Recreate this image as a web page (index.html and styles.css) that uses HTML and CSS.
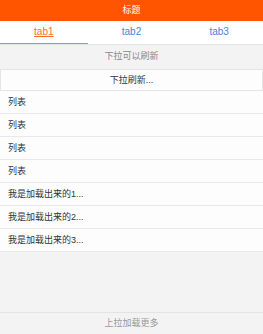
FILE: index.html
```html
<!DOCTYPE html>
<html lang="zh-CN">
<head>
    <meta charset="UTF-8">
    <meta name="viewport" content="width=device-width, initial-scale=1.0">
    <title>标题</title>
    <link rel="stylesheet" href="styles.css">
</head>
<body>
    <div class="page">
        <div class="header">标题</div>
        <div class="tabs">
            <a class="tab active">tab1</a>
            <a class="tab">tab2</a>
            <a class="tab">tab3</a>
        </div>
        <div class="pull-hint">下拉可以刷新</div>
        <div class="list">
            <div class="refreshing">下拉刷新...</div>
            <div class="item">列表</div>
            <div class="item">列表</div>
            <div class="item">列表</div>
            <div class="item">列表</div>
            <div class="item">我是加载出来的1...</div>
            <div class="item">我是加载出来的2...</div>
            <div class="item">我是加载出来的3...</div>
        </div>
        <div class="spacer"></div>
        <div class="footer">上拉加载更多</div>
    </div>
</body>
</html>
```

FILE: styles.css
```css
* {
    box-sizing: border-box;
}

body {
    margin: 0;
    font-family: 'Liberation Sans', 'Noto Sans CJK SC', sans-serif;
    font-size: 9px;
    background: #f3f3f3;
    color: #333;
}

.page {
    display: flex;
    flex-direction: column;
    height: 100vh;
}

.header {
    height: 21px;
    line-height: 21px;
    background: #ff5400;
    color: #fff;
    text-align: center;
}

.tabs {
    display: flex;
    height: 24px;
    background: #fff;
    border-bottom: 1px solid #e3e3e3;
}

.tab {
    flex: 1;
    text-align: center;
    font-size: 10px;
    line-height: 22px;
    color: #3a8ad6;
    border-bottom: 1px solid transparent;
}

.tab.active {
    color: #ff6a2e;
    text-decoration: underline;
    border-bottom-color: #ff7a45;
}

.pull-hint {
    height: 24px;
    line-height: 22px;
    text-align: center;
    color: #888;
}

.list {
    background: #fff;
}

.refreshing {
    height: 22px;
    line-height: 21px;
    text-align: center;
    border: 1px solid #e5e5e5;
    background: #fdfdfd;
}

.item {
    height: 23px;
    line-height: 22px;
    padding-left: 8px;
    border-bottom: 1px solid #e8e8e8;
    background: #fdfdfd;
}

.spacer {
    flex: 1;
}

.footer {
    height: 22px;
    line-height: 21px;
    text-align: center;
    color: #999;
    border-top: 1px solid #e3e3e3;
}
```
